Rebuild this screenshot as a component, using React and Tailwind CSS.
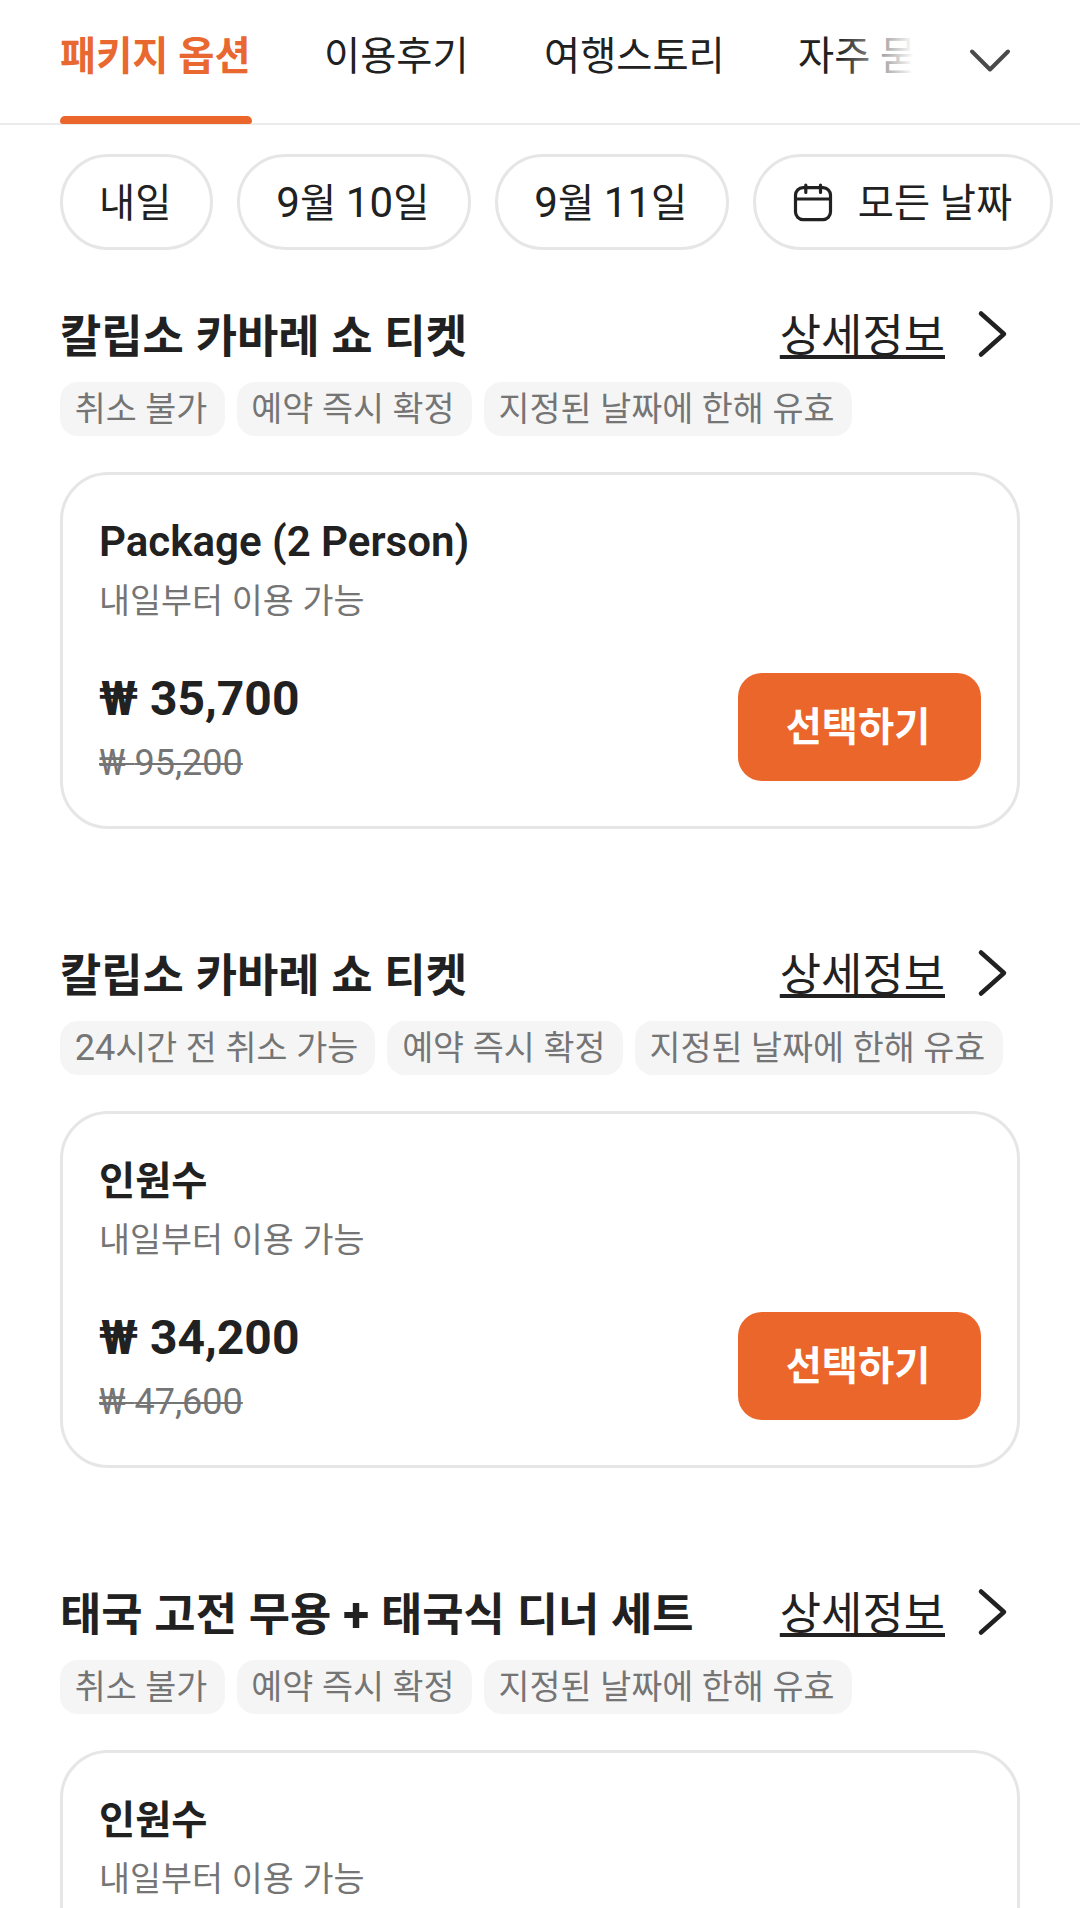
import React from "react"

const TABS = ["패키지 옵션", "이용후기", "여행스토리"]

const DATES = ["내일", "9월 10일", "9월 11일"]

const SECTIONS = [
    {
        title: "칼립소 카바레 쇼 티켓",
        tags: ["취소 불가", "예약 즉시 확정", "지정된 날짜에 한해 유효"],
        name: "Package (2 Person)",
        price: "35,700",
        original: "95,200",
    },
    {
        title: "칼립소 카바레 쇼 티켓",
        tags: ["24시간 전 취소 가능", "예약 즉시 확정", "지정된 날짜에 한해 유효"],
        name: "인원수",
        price: "34,200",
        original: "47,600",
    },
    {
        title: "태국 고전 무용 + 태국식 디너 세트",
        tags: ["취소 불가", "예약 즉시 확정", "지정된 날짜에 한해 유효"],
        name: "인원수",
    },
]

// Latin letters and digits run a little larger than the Hangul beside them
function Mixed({ text }) {
    return text.split(/([\x21-\x7e](?:[\x20-\x7e]*[\x21-\x7e])?)/).map((part, i) =>
        i % 2 ? (
            <span key={i} className="text-[1.07em] leading-none">
                {part}
            </span>
        ) : (
            part
        )
    )
}

function TabBar() {
    return (
        <nav className="relative flex h-[125px] shrink-0 border-b-2 border-[#ebebeb] pl-[60px] text-[39.3px] leading-[56px] whitespace-nowrap">
            <div className="flex h-[124px] w-[192px] flex-col justify-between pt-[29px] font-bold text-[#e8682f]">
                {TABS[0]}
                <span className="relative h-[8px] w-full rounded-t-[5px] rounded-b-[3px] bg-[#eb662b]" />
            </div>
            <div className="ml-[72px] w-[144px] pt-[29px]">{TABS[1]}</div>
            <div className="ml-[76px] w-[180px] pt-[29px]">{TABS[2]}</div>
            <div className="ml-[74px] w-[115px] overflow-hidden pt-[29px]">자주 묻는 질문</div>
            <div className="absolute top-0 left-[838px] h-[120px] w-[76px] bg-linear-to-r from-white/0 to-white" />
            <svg className="absolute top-[40px] left-[968px]" width="44" height="40" viewBox="0 0 44 40" fill="none">
                <path d="M4 11.5L22 29.5L40 11.5" stroke="#4a4a4a" strokeWidth="4" strokeLinecap="round" strokeLinejoin="round" />
            </svg>
        </nav>
    )
}

function DateFilters() {
    return (
        <div className="mt-[29px] flex gap-[24px] pl-[60px] text-[39.3px] whitespace-nowrap">
            {DATES.map((date) => (
                <button key={date} className="h-[96px] rounded-full border-3 border-[#e6e6e6] pt-[5px] pr-[39px] pl-[36px]">
                    <Mixed text={date} />
                </button>
            ))}
            <button className="flex h-[96px] items-center gap-[25px] rounded-full border-3 border-[#e6e6e6] pr-[38px] pl-[36.5px]">
                <svg width="40" height="40" viewBox="0 0 40 40" fill="none" stroke="#212121" strokeWidth="3.2" strokeLinecap="round">
                    <rect x="2.5" y="5.6" width="35" height="32" rx="7.5" />
                    <path d="M3 17H37M12.8 3V10.5M27.5 3V10.5" />
                </svg>
                <span className="pt-[5px]">모든 날짜</span>
            </button>
        </div>
    )
}

function PackageSection({ section }) {
    return (
        <section className="h-[639px] px-[60px]">
            <div className="flex h-[72px] items-center justify-between">
                <h2 className="pt-[3px] text-[44.9px] leading-[72px] font-bold whitespace-nowrap [word-spacing:0.6px]">
                    <Mixed text={section.title} />
                </h2>
                <a className="flex items-center gap-[31px] pt-[2px] text-[44.9px] leading-[72px] underline decoration-4 underline-offset-[3px] [text-decoration-skip-ink:none]">
                    상세정보
                    <svg className="mr-[12px] mb-[6px]" width="32" height="50" viewBox="0 0 32 50" fill="none">
                        <path d="M5 4.5L28 25L5 45.5" stroke="#212121" strokeWidth="4.5" strokeLinecap="round" strokeLinejoin="round" />
                    </svg>
                </a>
            </div>
            <div className="mt-[10px] flex gap-[12px]">
                {section.tags.map((tag) => (
                    <span key={tag} className="h-[54px] rounded-[18px] bg-[#f5f5f5] pr-[17.3px] pl-[14.7px] text-[33.7px] leading-[56px] whitespace-nowrap text-[#757575] [word-spacing:0.3px]">
                        <Mixed text={tag} />
                    </span>
                ))}
            </div>
            <div className="mt-[36px] h-[357px] rounded-[48px] border-3 border-[#e6e6e6] px-[36px] pt-[41px]">
                <h3 className="text-[39.3px] leading-[54px] font-semibold">
                    <Mixed text={section.name} />
                </h3>
                <p className="mt-[9px] text-[33.7px] leading-[46px] text-[#757575] [word-spacing:0.4px]">내일부터 이용 가능</p>
                {section.price && (
                    <div className="mt-[43px] flex justify-between">
                        <div>
                            <p className="text-[48px] leading-[62px] font-bold">₩ {section.price}</p>
                            <p className="mt-[4px] text-[36px] leading-[58px] text-[#757575] line-through decoration-2">₩ {section.original}</p>
                        </div>
                        <button className="mt-[5px] h-[108px] w-[243px] rounded-[24px] bg-[#eb662b] pt-[2px] pr-[3px] text-[39.3px] font-bold text-white">
                            선택하기
                        </button>
                    </div>
                )}
            </div>
        </section>
    )
}

export default function App() {
    return (
        <main className="h-[1908px] w-[1080px] overflow-hidden bg-white font-['Roboto','Noto_Sans_CJK_KR',sans-serif] text-[#212121]">
            <TabBar />
            <DateFilters />
            <div className="mt-[50px]">
                {SECTIONS.map((section, i) => (
                    <PackageSection key={i} section={section} />
                ))}
            </div>
        </main>
    )
}
